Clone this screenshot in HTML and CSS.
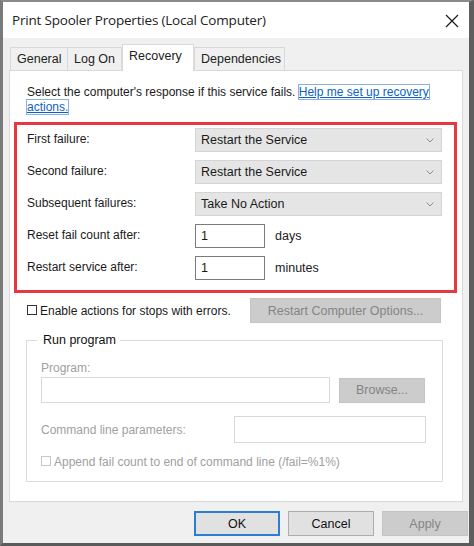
FILE: index.html
```html
<!DOCTYPE html>
<html lang="en">

<head>
    <meta charset="UTF-8">
    <title>Print Spooler Properties (Local Computer)</title>
    <link rel="stylesheet" href="styles.css">
</head>

<body>
    <div class="window">
        <div class="titlebar">
            <span class="title">Print Spooler Properties (Local Computer)</span>
            <svg class="close" width="14" height="14" viewBox="0 0 14 14" fill="none" stroke="#1a1a1a" stroke-width="1.2">
                <path d="M1 1L13 13M13 1L1 13"></path>
            </svg>
        </div>

        <div class="dialog">
            <div class="tabs">
                <div class="tab">General</div>
                <div class="tab">Log On</div>
                <div class="tab active">Recovery</div>
                <div class="tab">Dependencies</div>
            </div>

            <div class="panel">
                <p class="intro">
                    Select the computer's response if this service fails. <a class="link" href="#">Help me set up recovery actions.</a>
                </p>

                <div class="highlight">
                    <div class="row">
                        <span class="label">First failure:</span>
                        <div class="select">Restart the Service<svg class="chev" width="8" height="5" viewBox="0 0 8 5" fill="none" stroke="#8c8c8c"><path d="M0.5 0.5L4 4L7.5 0.5"></path></svg></div>
                    </div>
                    <div class="row">
                        <span class="label">Second failure:</span>
                        <div class="select">Restart the Service<svg class="chev" width="8" height="5" viewBox="0 0 8 5" fill="none" stroke="#8c8c8c"><path d="M0.5 0.5L4 4L7.5 0.5"></path></svg></div>
                    </div>
                    <div class="row">
                        <span class="label">Subsequent failures:</span>
                        <div class="select">Take No Action<svg class="chev" width="8" height="5" viewBox="0 0 8 5" fill="none" stroke="#8c8c8c"><path d="M0.5 0.5L4 4L7.5 0.5"></path></svg></div>
                    </div>
                    <div class="row">
                        <span class="label">Reset fail count after:</span>
                        <div class="num">1</div>
                        <span class="unit">days</span>
                    </div>
                    <div class="row">
                        <span class="label">Restart service after:</span>
                        <div class="num">1</div>
                        <span class="unit">minutes</span>
                    </div>
                </div>

                <div class="stops">
                    <label class="check"><span class="box"></span>Enable actions for stops with errors.</label>
                    <div class="btn disabled wide">Restart Computer Options...</div>
                </div>

                <fieldset class="group">
                    <legend>Run program</legend>
                    <div class="muted prog-label">Program:</div>
                    <div class="prog-row">
                        <div class="field prog"></div>
                        <div class="btn disabled browse">Browse...</div>
                    </div>
                    <div class="cmd-row">
                        <span class="muted">Command line parameters:</span>
                        <div class="field cmd"></div>
                    </div>
                    <label class="check muted append"><span class="box faint"></span>Append fail count to end of command line (/fail=%1%)</label>
                </fieldset>
            </div>

            <div class="actions">
                <div class="btn default">OK</div>
                <div class="btn">Cancel</div>
                <div class="btn disabled">Apply</div>
            </div>
        </div>
    </div>
</body>

</html>
```

FILE: styles.css
```css
*,
*::before,
*::after {
    box-sizing: border-box;
    margin: 0;
    padding: 0;
}

:root {
    --dialog: #f0f0f0;
    --line: #d9d9d9;
    --text: #1a1a1a;
    --muted: #a0a0a0;
    --red: #e8383f;
}

html,
body {
    width: 474px;
    height: 546px;
    overflow: hidden;
}

body {
    font-family: "Liberation Sans", Arial, sans-serif;
    font-size: 12px;
    color: var(--text);
    background: #6e6e6e;
}

.window {
    width: 474px;
    height: 546px;
    border-top: 2px solid #8a8a8a;
    border-left: 3px solid #7a7a7a;
    border-right: 5px solid #5e5e5e;
    border-bottom: 3px solid #5a5a5a;
    display: flex;
    flex-direction: column;
    background: var(--dialog);
}

.titlebar {
    height: 36px;
    background: #fff;
    display: flex;
    align-items: center;
    justify-content: space-between;
    padding: 0 10px 0 9px;
}

.title {
    font-family: "Open Sans", "Noto Sans", sans-serif;
    font-size: 13.5px;
    color: #222;
    letter-spacing: -0.2px;
}

.close {
    margin-top: 1px;
}

.dialog {
    flex: 1;
    display: flex;
    flex-direction: column;
    padding: 7px 0 0 6px;
}

.tabs {
    display: flex;
    align-items: flex-end;
    height: 25px;
    margin-left: 1px;
    position: relative;
    z-index: 1;
}

.tab {
    flex-shrink: 0;
    white-space: nowrap;
    height: 23px;
    padding: 0 6px;
    display: flex;
    align-items: center;
    background: var(--dialog);
    border: 1px solid var(--line);
    border-bottom: none;
    margin-right: -1px;
    font-size: 12.5px;
    color: #222;
}

.tab:first-child {
    width: 58px;
}

.tab:nth-child(2) {
    width: 55px;
}

.tab.active {
    height: 27px;
    width: 72px;
    background: #fff;
    margin-bottom: -1px;
    padding-bottom: 4px;
    margin-left: 1px;
    margin-right: 0;
}

.tab:last-child {
    width: 91px;
}

.panel {
    width: 454px;
    height: 432px;
    background: #fff;
    border: 1px solid var(--line);
    display: flex;
    flex-direction: column;
}

.intro {
    margin: 14px 0 0 17px;
    line-height: 15px;
    width: 420px;
}

.link {
    color: #0b62c4;
    text-decoration: underline;
    outline: 1px solid #8ab2e0;
    box-decoration-break: clone;
    -webkit-box-decoration-break: clone;
}

.highlight {
    width: 443px;
    margin: 7px 0 0 4px;
    border: 3px solid var(--red);
    padding: 3px 12px 10px 10px;
    display: flex;
    flex-direction: column;
    gap: 8px;
}

.row {
    height: 24px;
    display: flex;
    align-items: center;
}

.label {
    width: 168px;
    margin-top: -2px;
}

.select {
    width: 247px;
    height: 24px;
    background: #e5e5e5;
    border: 1px solid #d4d4d4;
    display: flex;
    align-items: center;
    justify-content: space-between;
    padding: 0 7px 0 5px;
    font-size: 12.5px;
}

.num {
    width: 70px;
    height: 24px;
    border: 1px solid #7a7a7a;
    background: #fff;
    padding: 3px 0 0 5px;
    font-size: 12.5px;
    line-height: 16px;
}

.unit {
    margin-left: 10px;
    font-size: 12.5px;
}

.stops {
    display: flex;
    align-items: center;
    margin: 5px 0 0 17px;
    height: 25px;
}

.check {
    display: flex;
    align-items: center;
}

.stops .check {
    width: 223px;
}

.box {
    width: 10px;
    height: 10px;
    border: 1px solid #333;
    background: #fff;
    margin-right: 3px;
    margin-top: -2px;
}

.box.faint {
    border-color: #c8c8c8;
    margin-right: 3px;
}

.btn {
    height: 25px;
    width: 86px;
    display: flex;
    align-items: center;
    justify-content: center;
    background: #e1e1e1;
    border: 1px solid #adadad;
    font-size: 12.5px;
    color: #111;
}

.btn.disabled {
    background: #cccccc;
    border-color: #c4c4c4;
    color: #848484;
}

.btn.wide {
    width: 191px;
}

.btn.default {
    border: 2px solid #2a7fd4;
}

.group {
    width: 416px;
    height: 149px;
    margin: 10px 0 0 16px;
    border: 1px solid #dcdcdc;
    padding: 0 16px 0 14px;
}

.group legend {
    margin-left: -4px;
    padding: 0 4px 0 6px;
    font-size: 12.5px;
    color: #111;
}

.muted {
    color: var(--muted);
}

.prog-label {
    margin-top: 14px;
}

.prog-row {
    display: flex;
    align-items: center;
    gap: 9px;
    margin-top: 2px;
}

.field {
    height: 26px;
    border: 1px solid #d8d8d8;
    background: #fff;
}

.prog {
    width: 289px;
}

.browse {
    width: 86px;
}

.cmd-row {
    display: flex;
    align-items: center;
    justify-content: space-between;
    margin-top: 13px;
    width: 385px;
}

.cmd {
    width: 192px;
    height: 27px;
}

.append {
    margin-top: 12px;
}

.actions {
    display: flex;
    justify-content: flex-end;
    gap: 8px;
    margin-top: 9px;
    padding-right: 1px;
}
```
